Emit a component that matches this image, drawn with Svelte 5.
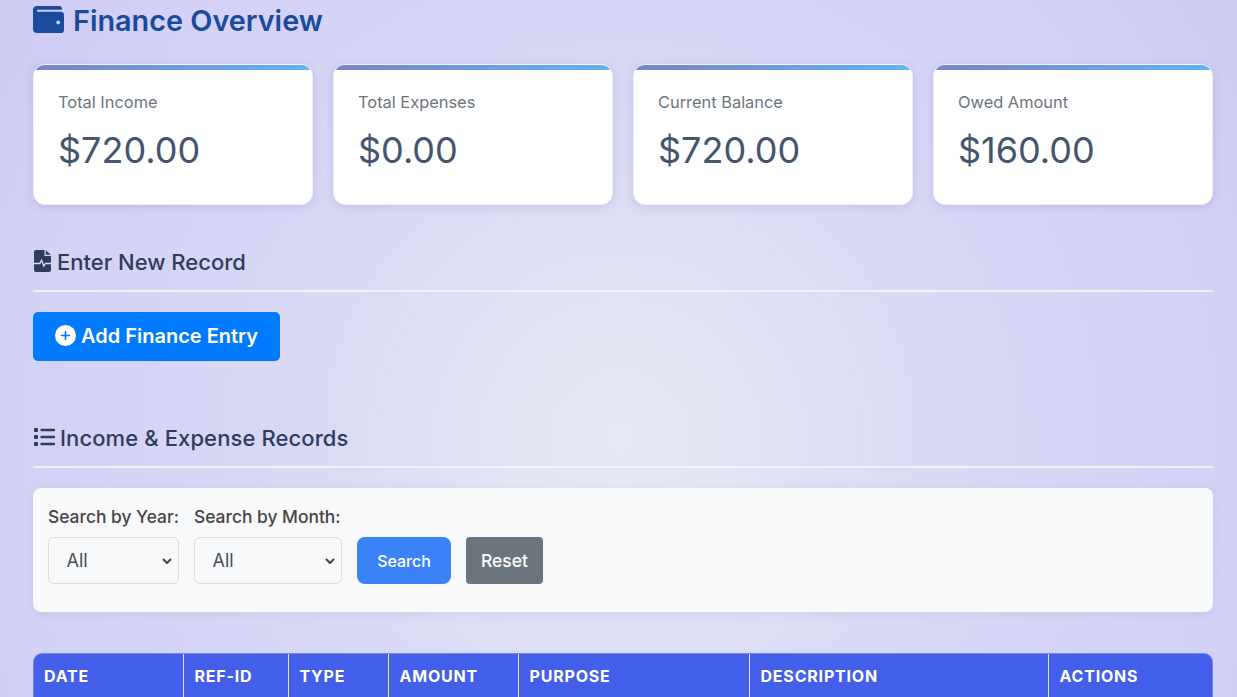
<script>
  const cards = [
    { label: 'Total Income', value: '$720.00' },
    { label: 'Total Expenses', value: '$0.00' },
    { label: 'Current Balance', value: '$720.00' },
    { label: 'Owed Amount', value: '$160.00' }
  ];
  const cols = [
    { name: 'DATE', cls: 'c-date' },
    { name: 'REF-ID', cls: 'c-ref' },
    { name: 'TYPE', cls: 'c-type' },
    { name: 'AMOUNT', cls: 'c-amount' },
    { name: 'PURPOSE', cls: 'c-purpose' },
    { name: 'DESCRIPTION', cls: 'c-desc' },
    { name: 'ACTIONS', cls: 'c-actions' }
  ];
</script>

<div class="page">
  <h1 class="title">
    <svg class="wallet" viewBox="0 0 512 512" aria-hidden="true"><path d="M461.2 128H80c-8.84 0-16-7.16-16-16s7.16-16 16-16h384c8.84 0 16-7.16 16-16 0-26.51-21.49-48-48-48H64C28.65 32 0 60.65 0 96v320c0 35.35 28.65 64 64 64h397.2c28.02 0 50.8-21.53 50.8-48V176c0-26.47-22.78-48-50.8-48zM416 336c-17.67 0-32-14.33-32-32s14.33-32 32-32 32 14.33 32 32-14.33 32-32 32z"/></svg>
    Finance Overview
  </h1>

  <div class="cards">
    {#each cards as card}
      <div class="card">
        <div class="label">{card.label}</div>
        <div class="value">{card.value}</div>
      </div>
    {/each}
  </div>

  <h2 class="section first">
    <svg class="file" viewBox="0 0 17 22" aria-hidden="true">
      <path d="M2 0H10.5V6H17V20a2 2 0 0 1-2 2H2a2 2 0 0 1-2-2V2a2 2 0 0 1 2-2Z"/>
      <path d="M11.8 0.2 16.8 4.8H11.8Z"/>
      <path class="pulse" d="M0 13.5H5.8L7.6 10.2L9.8 16L11.4 13.5H17"/>
    </svg>
    Enter New Record
  </h2>

  <button class="add" type="button">
    <svg class="plus" viewBox="0 0 21 21" aria-hidden="true">
      <circle cx="10.5" cy="10.5" r="10.5" fill="#fff"/>
      <path d="M10.5 6.5V14.5M6.5 10.5H14.5" stroke="#007bff" stroke-width="1.6" stroke-linecap="round"/>
    </svg>
    Add Finance Entry
  </button>

  <h2 class="section second">
    <svg class="list" viewBox="0 0 21 18" aria-hidden="true">
      <rect x="0" y="0" width="4" height="4" rx="1"/>
      <rect x="0" y="7" width="4" height="4" rx="1"/>
      <rect x="0" y="14" width="4" height="4" rx="1"/>
      <rect x="6.5" y="0.7" width="14.5" height="2.6" rx="0.8"/>
      <rect x="6.5" y="7.7" width="14.5" height="2.6" rx="0.8"/>
      <rect x="6.5" y="14.7" width="14.5" height="2.6" rx="0.8"/>
    </svg>
    Income &amp; Expense Records
  </h2>

  <form class="filters" onsubmit={(e) => e.preventDefault()}>
    <div class="field">
      <label for="year">Search by Year:</label>
      <select id="year" class="year"><option>All</option></select>
    </div>
    <div class="field">
      <label for="month">Search by Month:</label>
      <select id="month" class="month"><option>All</option></select>
    </div>
    <button class="search" type="submit">Search</button>
    <button class="reset" type="reset">Reset</button>
  </form>

  <table class="records">
    <thead>
      <tr>
        {#each cols as col}
          <th class={col.cls}>{col.name}</th>
        {/each}
      </tr>
    </thead>
  </table>
</div>

<style>
  :global(html), :global(body) { margin: 0; height: 100%; overflow: hidden; }
  :global(body) {
    background: radial-gradient(circle 790px at 620px 440px, #e7e8f4 0, #e3e4f4 100px, #dedff5 200px, #dadaf6 300px, #d7d6f6 430px, #d3d1f5 620px, #cdc9f3 790px);
    font-family: Inter, "Liberation Sans", sans-serif;
  }
  .page {
    box-sizing: border-box;
    height: 697px;
    overflow: hidden;
    padding: 0 24px 0 33px;
  }
  .title {
    display: flex;
    align-items: center;
    gap: 9px;
    margin: 0;
    height: 41px;
    font-size: 28.8px;
    font-weight: 600;
    color: #1a4a9c;
    white-space: nowrap;
  }
  .wallet { width: 31px; height: 31px; fill: #1a4a9c; flex: none; margin-top: -3px; }
  .cards {
    display: grid;
    grid-template-columns: repeat(4, 280px);
    gap: 20px;
    margin-top: 23px;
  }
  .card {
    box-sizing: border-box;
    height: 141px;
    padding: 27px 24px 0;
    background: #fff;
    border: 1px solid #eef0fb;
    border-radius: 12px;
    box-shadow: 0 2px 8px rgba(90, 90, 160, 0.18);
    position: relative;
    overflow: hidden;
  }
  .card::before {
    content: '';
    position: absolute;
    inset: 0 0 auto 0;
    height: 5px;
    background: linear-gradient(90deg, #7a82c8, #63b3ed);
  }
  .label { font-size: 16.4px; line-height: 20px; color: #6c757d; }
  .value {
    margin-top: 16px;
    font-size: 36px;
    line-height: 44px;
    color: #44546f;
  }
  .section {
    display: flex;
    align-items: center;
    margin: 0;
    padding-bottom: 14px;
    border-bottom: 2px solid #f1f2fb;
    font-size: 22px;
    line-height: 28px;
    font-weight: 500;
    color: #2f3b60;
  }
  .section.first { margin-top: 43px; gap: 6px; }
  .section.second { margin-top: 63px; gap: 5px; letter-spacing: 0.1px; }
  .file { width: 17px; height: 22px; fill: #2f3b60; flex: none; margin: -3px 0 0 1px; }
  .pulse { fill: none; stroke: #e0e0f6; stroke-width: 1.3; }
  .list { width: 21px; height: 18px; fill: #2f3b60; flex: none; margin: -3px 0 0 1px; }
  .add {
    display: flex;
    align-items: center;
    gap: 5px;
    margin-top: 20px;
    height: 49px;
    width: 247px;
    padding: 0 0 2px 22px;
    border: 0;
    border-radius: 5px;
    background: #007bff;
    color: #fff;
    font: 600 20px Inter, sans-serif;
  }
  .plus { width: 21px; height: 21px; flex: none; }
  .filters {
    display: flex;
    align-items: flex-end;
    gap: 15px;
    box-sizing: border-box;
    height: 124px;
    margin-top: 20px;
    padding: 16px 15px 28px;
    background: #f8f9fb;
    border-radius: 8px;
    box-shadow: 0 2px 6px rgba(90, 90, 160, 0.1);
  }
  .field { display: flex; flex-direction: column; gap: 8px; }
  .field label { font-size: 17.4px; line-height: 24px; font-weight: 500; color: #454545; white-space: nowrap; }
  select {
    box-sizing: border-box;
    height: 47px;
    padding: 0 20px 0 17.5px;
    appearance: none;
    background: #f8f9fb url("data:image/svg+xml,%3Csvg xmlns='http://www.w3.org/2000/svg' width='10' height='6' viewBox='0 0 10 6'%3E%3Cpath d='M1 1l4 4 4-4' fill='none' stroke='%23444' stroke-width='2'/%3E%3C/svg%3E") no-repeat right 6px center;
    border: 1px solid #dcdcdc;
    border-radius: 6px;
    font: 400 18px Inter, sans-serif;
    color: #495057;
  }
  .year { width: 131px; }
  .month { width: 148px; }
  .search, .reset {
    height: 47px;
    border: 0;
    color: #fff;
    font-family: Inter, sans-serif;
    font-weight: 500;
    padding: 0;
  }
  .search { width: 94px; background: #3b82f6; border-radius: 8px; font-size: 16px; }
  .reset { width: 77px; background: #6c757d; border-radius: 4px; font-size: 17.5px; }
  .records {
    box-sizing: border-box;
    width: 1180px;
    margin-top: 41px;
    table-layout: fixed;
    border-collapse: separate;
    border-spacing: 0;
    background: #4460ea;
    border: 1px solid rgba(255, 255, 255, 0.25);
    border-bottom: 0;
    border-radius: 9px 9px 0 0;
  }
  .records th {
    box-sizing: border-box;
    height: 46px;
    padding: 0 0 2px 10.5px;
    text-align: left;
    font-size: 16px;
    font-weight: 700;
    letter-spacing: 0.8px;
    color: #fff;
    border-left: 1px solid #dfe3fa;
  }
  .records th:first-child { border-left: 0; padding-left: 10px; }
  .c-date { width: 149px; }
  .c-ref { width: 105px; }
  .c-type { width: 100px; }
  .c-amount { width: 130px; }
  .c-purpose { width: 231px; }
  .c-desc { width: 299px; }
  .c-actions { width: 164px; }
</style>
